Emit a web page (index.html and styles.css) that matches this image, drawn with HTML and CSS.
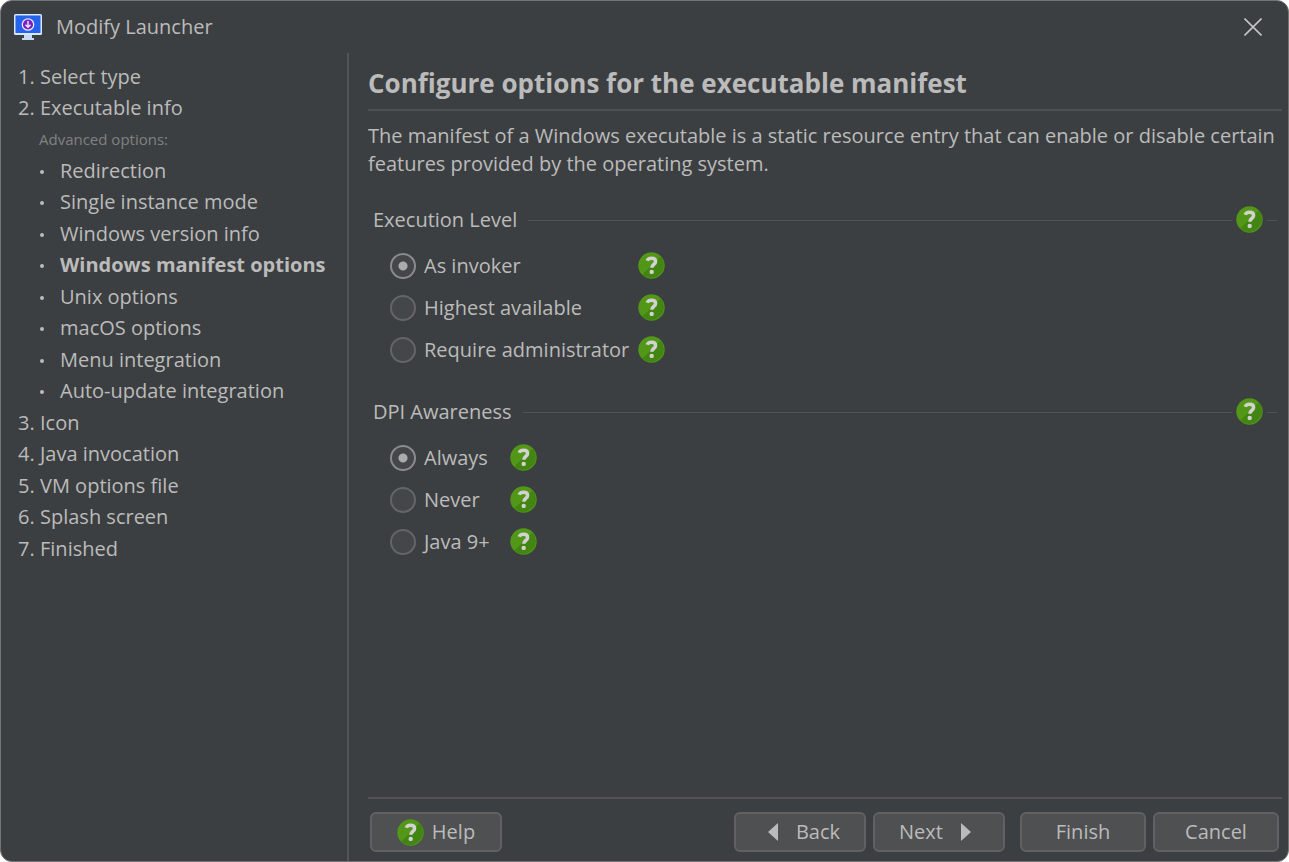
FILE: index.html
```html
<!DOCTYPE html>
<html lang="en">
<head>
<meta charset="utf-8">
<title>Modify Launcher</title>
<link rel="stylesheet" href="styles.css">
</head>
<body>
<svg class="defs" aria-hidden="true">
  <symbol id="help" viewBox="0 0 27 27">
    <circle cx="13.5" cy="13.5" r="13.2" fill="#529717"/>
    <path d="M22.8 4.2A13.2 13.2 0 0 1 4.2 22.8Z" fill="#438512"/>
    <path d="M9.300 8.800C9.800 7 11.500 6.300 13.500 6.300c2.700 0 4.100 1.200 4.100 3.100 0 2.900-3.800 3-3.800 6.400" fill="none" stroke="#d2d2d2" stroke-width="3.500"/>
    <circle cx="13.700" cy="19.900" r="2.200" fill="#d2d2d2"/>
  </symbol>
</svg>
<div class="dialog">
  <header class="titlebar">
    <svg class="logo" viewBox="0 0 28 27" aria-hidden="true">
      <path d="M10 20h8v4h2v2H8v-2h2Z" fill="#c5daf5"/>
      <rect width="28" height="21" rx="1.500" fill="#d6e6fb"/>
      <rect x="1.500" y="1.500" width="25" height="17.500" fill="#2563eb"/>
      <circle cx="14" cy="10.500" r="5.700" fill="#7a1fc4" stroke="#e6e4fa" stroke-width="1.300"/>
      <path d="M14 7v6M11.500 10.700 14 13.200l2.500-2.500" fill="none" stroke="#f0e8fc" stroke-width="1.400"/>
    </svg>
    <span class="title">Modify Launcher</span>
    <button class="close" type="button" aria-label="Close">
      <svg viewBox="0 0 18 18" aria-hidden="true"><path d="M.5.5l17 17M17.500.5l-17 17" stroke="#c4c4c4" stroke-width="1.600"/></svg>
    </button>
  </header>
  <div class="body">
    <nav class="steps" aria-label="Steps">
      <ol class="step-list">
        <li><span class="num">1.</span>Select type</li>
        <li><span class="num">2.</span>Executable info
          <p class="advanced">Advanced options:</p>
          <ul class="substeps">
            <li>Redirection</li>
            <li>Single instance mode</li>
            <li>Windows version info</li>
            <li class="current" aria-current="step">Windows manifest options</li>
            <li>Unix options</li>
            <li>macOS options</li>
            <li>Menu integration</li>
            <li>Auto-update integration</li>
          </ul>
        </li>
        <li><span class="num">3.</span>Icon</li>
        <li><span class="num">4.</span>Java invocation</li>
        <li><span class="num">5.</span>VM options file</li>
        <li><span class="num">6.</span>Splash screen</li>
        <li><span class="num">7.</span>Finished</li>
      </ol>
    </nav>
    <main class="content">
      <h1 class="heading">Configure options for the executable manifest</h1>
      <p class="intro">The manifest of a Windows executable is a static resource entry that can enable or disable certain features provided by the operating system.</p>
      <section class="group" role="radiogroup" aria-labelledby="level">
        <div class="group-head">
          <h2 class="group-title" id="level">Execution Level</h2>
          <button class="help" type="button" aria-label="Help on execution level"><svg><use href="#help"/></svg></button>
        </div>
        <div class="options">
          <label class="option"><input type="radio" name="level" checked>As invoker</label>
          <button class="help" type="button" aria-label="Help on as invoker"><svg><use href="#help"/></svg></button>
          <label class="option"><input type="radio" name="level">Highest available</label>
          <button class="help" type="button" aria-label="Help on highest available"><svg><use href="#help"/></svg></button>
          <label class="option"><input type="radio" name="level">Require administrator</label>
          <button class="help" type="button" aria-label="Help on require administrator"><svg><use href="#help"/></svg></button>
        </div>
      </section>
      <section class="group" role="radiogroup" aria-labelledby="dpi">
        <div class="group-head">
          <h2 class="group-title" id="dpi">DPI Awareness</h2>
          <button class="help" type="button" aria-label="Help on DPI awareness"><svg><use href="#help"/></svg></button>
        </div>
        <div class="options options-short">
          <label class="option"><input type="radio" name="dpi" checked>Always</label>
          <button class="help" type="button" aria-label="Help on always"><svg><use href="#help"/></svg></button>
          <label class="option"><input type="radio" name="dpi">Never</label>
          <button class="help" type="button" aria-label="Help on never"><svg><use href="#help"/></svg></button>
          <label class="option"><input type="radio" name="dpi">Java 9+</label>
          <button class="help" type="button" aria-label="Help on Java 9+"><svg><use href="#help"/></svg></button>
        </div>
      </section>
      <footer class="actions">
        <button class="btn btn-help" type="button"><svg class="help-icon" aria-hidden="true"><use href="#help"/></svg>Help</button>
        <button class="btn btn-wide btn-back" type="button"><svg class="arrow" viewBox="0 0 10 18" aria-hidden="true"><path d="M10 0v18L0 9Z" fill="#bbb"/></svg>Back</button>
        <button class="btn btn-wide btn-next" type="button">Next<svg class="arrow" viewBox="0 0 10 18" aria-hidden="true"><path d="M0 0v18l10-9Z" fill="#bbb"/></svg></button>
        <button class="btn btn-finish" type="button">Finish</button>
        <button class="btn" type="button">Cancel</button>
      </footer>
    </main>
  </div>
</div>
</body>
</html>
```

FILE: styles.css
```css
* { box-sizing: border-box; }

body {
  margin: 0;
  background: #fff;
  color: #bbb;
  font: 20px/28px "Open Sans", "Noto Sans", sans-serif;
}

h1, h2, p, ol, ul { margin: 0; padding: 0; }
ol, ul { list-style: none; }

button {
  margin: 0;
  padding: 0;
  border: 0;
  background: none;
  color: inherit;
  font: inherit;
}

.defs { display: none; }

.dialog {
  display: flex;
  flex-direction: column;
  min-height: 100vh;
  border: 1px solid #737474;
  border-radius: 12px;
  background: #3c3f41;
}

.titlebar {
  display: flex;
  align-items: center;
  gap: 14px;
  height: 52px;
  padding: 0 26px 0 13px;
}
.logo { width: 28px; height: 27px; }
.title { flex: 1; }
.close svg { display: block; width: 18px; height: 18px; }

.body { display: flex; flex: 1; }

.steps {
  flex: none;
  width: 348px;
  padding: 8px 0 0 17px;
  border-right: 2px solid #515457;
}
.step-list { line-height: 31px; }
.step-list > li:nth-child(2n+4) { line-height: 32px; }
.num { display: inline-block; width: 22px; }
.advanced { padding: 1px 0 0 21px; color: #808182; font-size: 15px; }
.substeps li { display: flex; align-items: center; }
.substeps li:nth-child(even) { line-height: 32px; }
.substeps li::before {
  content: "";
  width: 4px;
  height: 4px;
  margin: 2px 16px 0 22px;
  border-radius: 50%;
  background: #bbb;
}
.current { font-weight: bold; }

.content {
  display: flex;
  flex: 1;
  flex-direction: column;
  padding: 12px 6px 9px 19px;
}
.heading {
  padding-bottom: 8px;
  border-bottom: 2px solid #4d5053;
  font-size: 26px;
  line-height: 36px;
}
.intro { padding-top: 11px; }

.group { padding: 26px 5px 0; }
.group + .group { padding-top: 25px; }
.group-head { display: flex; align-items: center; height: 32px; }
.group-head::after {
  content: "";
  width: 10px;
  margin-left: 4px;
  border-top: 1px solid #515457;
}
.group-title {
  display: flex;
  flex: 1;
  align-items: center;
  gap: 11px;
  margin-right: 4px;
  font-size: 20px;
  font-weight: normal;
}
.group-title::after { content: ""; flex: 1; border-top: 1px solid #515457; }

.help, .help svg, .help-icon { display: block; width: 27px; height: 27px; }
.help { margin-bottom: 2px; }

.options {
  display: grid;
  grid-template-columns: max-content 27px;
  grid-auto-rows: 42px;
  align-items: center;
  column-gap: 9px;
  padding: 9px 0 0 17px;
}
.options-short { column-gap: 20px; }
.option { display: flex; align-items: center; gap: 8px; }
.option input {
  appearance: none;
  width: 26px;
  height: 26px;
  margin: 0;
  border: 2px solid #636567;
  border-radius: 50%;
  background: #43474a;
}
.option input:checked {
  border-color: #8a8b8c;
  background: radial-gradient(circle, #ababab 4px, #43474a 5px);
}

.actions {
  display: flex;
  gap: 7px;
  margin-top: auto;
  padding: 13px 3px 0 2px;
  border-top: 2px solid #515354;
}
.btn {
  display: flex;
  align-items: center;
  justify-content: center;
  width: 126px;
  height: 40px;
  border: 2px solid #5f6162;
  border-radius: 6px;
  background: #4e5052;
}
.btn-help { gap: 8px; width: 132px; margin-right: auto; }
.btn-wide { gap: 18px; width: 132px; }
.btn-back { padding-left: 8px; }
.btn-next { padding-right: 8px; }
.btn-finish { margin-left: 8px; }
.arrow { width: 10px; height: 18px; }
```
